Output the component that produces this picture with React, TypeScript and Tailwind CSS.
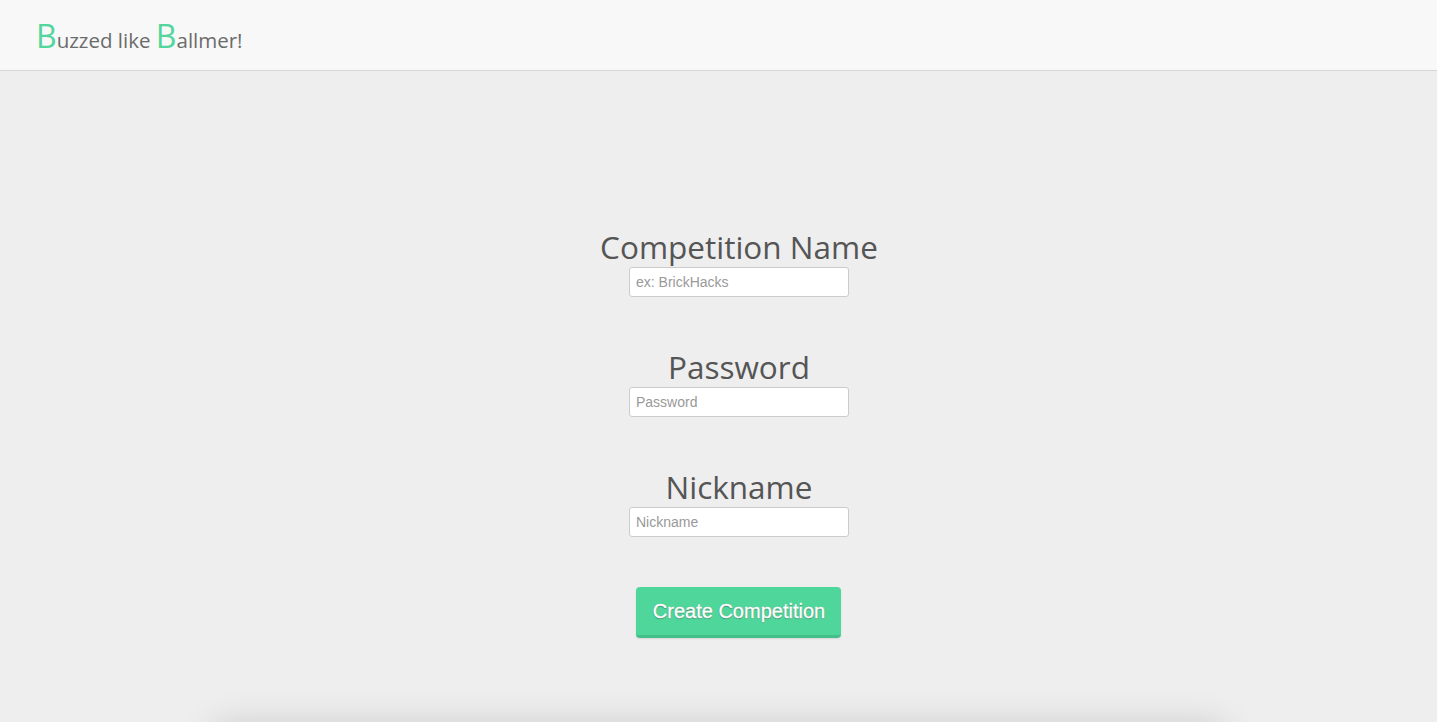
import { useState } from "react";

const fields = [
  { label: "Competition Name", placeholder: "ex: BrickHacks", type: "text" },
  { label: "Password", placeholder: "Password", type: "password" },
  { label: "Nickname", placeholder: "Nickname", type: "text" },
];

function Header() {
  return (
    <header className="h-[71px] bg-[#f8f8f8] border-b border-[#d6d6d6] px-[36px] flex items-center">
      <h1
        className="text-[20.5px] text-[#6b6b6b] leading-none pt-[1px]"
        style={{ fontFamily: '"Open Sans", sans-serif' }}
      >
        <span className="text-[32px] text-[#52d69c]">B</span>uzzed like{" "}
        <span className="text-[32px] text-[#52d69c]">B</span>allmer!
      </h1>
    </header>
  );
}

export default function App() {
  const [values, setValues] = useState<string[]>(["", "", ""]);

  return (
    <div className="min-h-screen bg-[#eeeeee] overflow-hidden">
      <Header />
      <main className="flex flex-col items-center pt-[158px]">
        <div className="flex flex-col items-center pl-[41px]">
          {fields.map((f, i) => (
            <div key={f.label} className="flex flex-col items-center mb-[52px]">
              <h2
                className="text-[31.5px] leading-[36px] text-[#555555] mb-[2px]"
                style={{ fontFamily: '"Open Sans", sans-serif' }}
              >
                {f.label}
              </h2>
              <input
                type={f.type}
                placeholder={f.placeholder}
                value={values[i]}
                onChange={(e) => {
                  const next = [...values];
                  next[i] = e.target.value;
                  setValues(next);
                }}
                className="w-[220px] h-[30px] bg-white border border-[#cccccc] rounded-[3px] px-[6px] text-[14px] text-[#333] placeholder:text-[#999999] outline-none"
                style={{ fontFamily: '"Liberation Sans", Arial, sans-serif' }}
              />
            </div>
          ))}
          <button
            className="-mt-[2px] w-[205px] h-[51px] bg-[#4fd69b] border-b-[3px] border-[#45bf89] rounded-[4px] text-white text-[20px] [-webkit-text-stroke:0.4px_white] [text-shadow:0_0_1px_rgba(0,0,0,0.45),0_1px_1px_rgba(0,0,0,0.3)] shadow-[0_1px_2px_rgba(0,0,0,0.1)]"
            style={{ fontFamily: '"Liberation Sans", Arial, sans-serif' }}
          >
            Create Competition
          </button>
        </div>
        <div className="mt-[88px] w-[1010px] h-[300px] bg-[#eeeeee] rounded-[6px] shadow-[0_0_36px_rgba(0,0,0,0.16)]" />
      </main>
    </div>
  );
}
